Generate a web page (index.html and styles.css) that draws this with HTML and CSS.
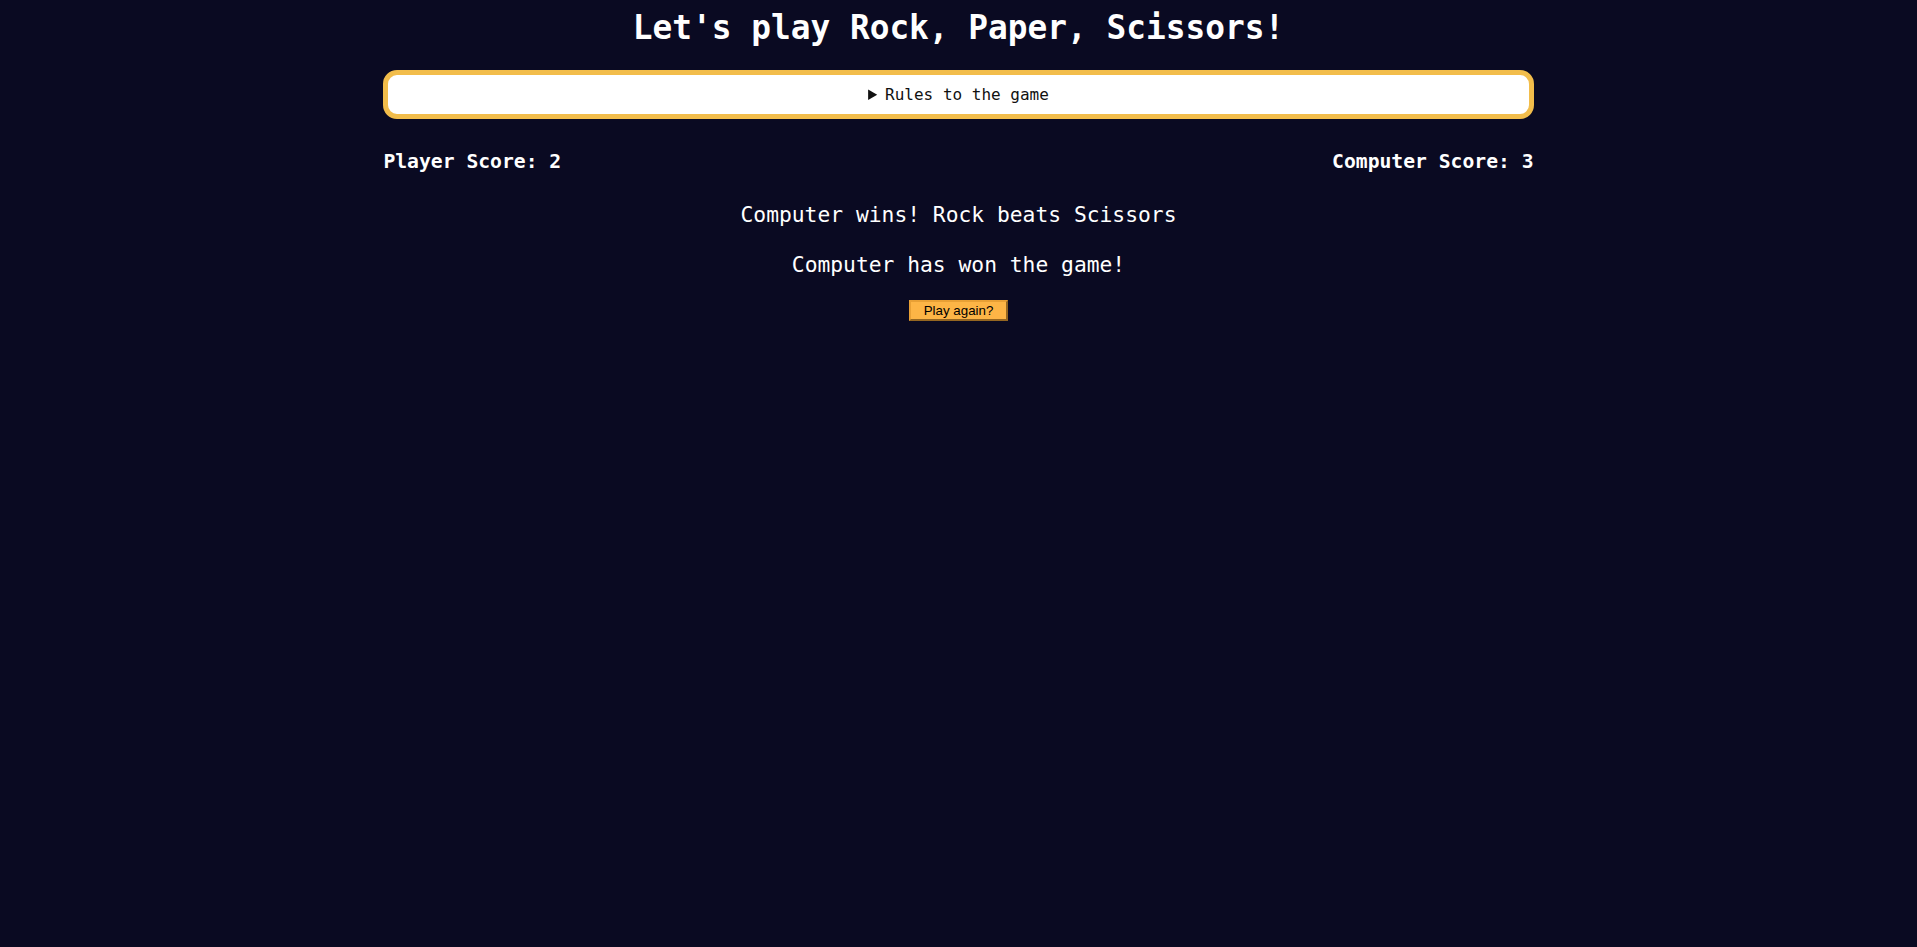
FILE: index.html
```html
<!DOCTYPE html>
<html lang="en">
<head>
<meta charset="utf-8">
<title>Rock, Paper, Scissors</title>
<link rel="stylesheet" href="styles.css">
</head>
<body>
<main class="game">
  <h1 class="title">Let's play Rock, Paper, Scissors!</h1>
  <details class="rules">
    <summary class="rules-summary">Rules to the game</summary>
  </details>
  <div class="scores">
    <span class="score">Player Score: 2</span>
    <span class="score">Computer Score: 3</span>
  </div>
  <p class="message message-round">Computer wins! Rock beats Scissors</p>
  <p class="message message-final">Computer has won the game!</p>
  <button class="again" type="button">Play again?</button>
</main>
</body>
</html>
```
FILE: styles.css
```css
html, body {
  margin: 0;
  padding: 0;
}

body {
  background: #0a0a22;
  color: #ffffff;
  font-family: "DejaVu Sans Mono", "Liberation Mono", monospace;
}

.game {
  width: 60%;
  margin: 0 auto;
  display: flex;
  flex-direction: column;
  align-items: stretch;
}

.title {
  margin: 8px 0 0;
  font-size: 32.8px;
  line-height: 40px;
  font-weight: bold;
  text-align: center;
}

.rules {
  margin-top: 22px;
  background: #ffffff;
  border: 5px solid #f2bd4b;
  border-radius: 14px;
  color: #111111;
}

.rules-summary {
  padding: 10px;
  font-size: 16px;
  line-height: 19px;
  text-align: center;
  cursor: pointer;
}

.scores {
  margin-top: 31px;
  display: flex;
  justify-content: space-between;
  font-size: 19.7px;
  line-height: 24px;
  font-weight: bold;
}

.message {
  margin: 28px 0 0;
  font-size: 21.3px;
  line-height: 26px;
  text-align: center;
}

.message-final {
  margin-top: 24px;
}

.again {
  align-self: center;
  margin-top: 22px;
  padding: 1px 13px;
  font-family: "Liberation Sans", Arial, sans-serif;
  font-size: 13.33px;
  line-height: 15px;
  color: #000000;
  background: #fdb546;
  border: 2px outset #e8a035;
  border-radius: 0;
}
```
